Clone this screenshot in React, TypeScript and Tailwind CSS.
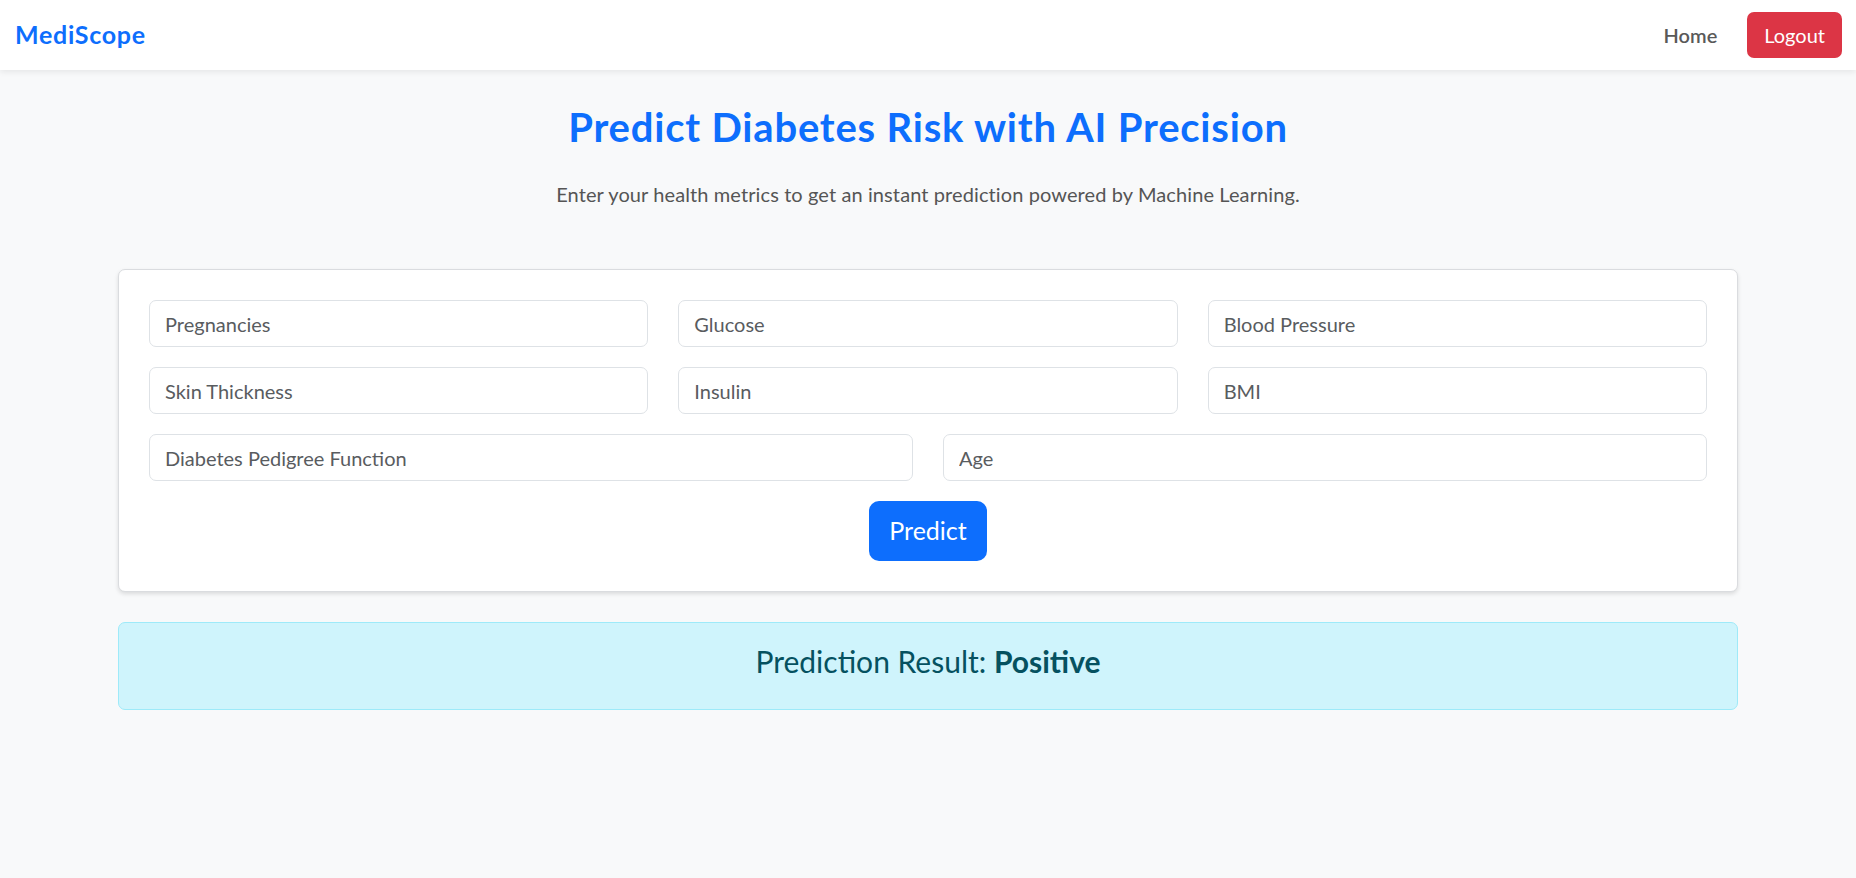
import React from 'react';

const fields = [
  ['Pregnancies', 'Glucose', 'Blood Pressure'],
  ['Skin Thickness', 'Insulin', 'BMI'],
];

function Field({ label }: { label: string }) {
  return (
    <input
      type="text"
      placeholder={label}
      className="w-full h-[47px] px-[15px] rounded-[7px] border border-[#dee2e6] bg-white text-[20px] text-[#212529] placeholder:text-[#595c5f] outline-none"
    />
  );
}

export default function App() {
  return (
    <div className="min-h-screen bg-[#f8f9fa] font-['Lato',sans-serif]">
      {/* Navbar */}
      <header className="h-[70px] bg-white shadow-[0_2px_6px_rgba(0,0,0,0.08)] flex items-center justify-between pl-[15px] pr-[14px]">
        <span className="text-[25px] font-bold text-[#0d6efd] tracking-[0.7px]">MediScope</span>
        <div className="flex items-center gap-[30px]">
          <a className="text-[20px] font-semibold text-[#595959]">Home</a>
          <button className="h-[46px] px-[17px] rounded-[7px] bg-[#dc3545] text-white text-[20px]">Logout</button>
        </div>
      </header>

      <main className="w-[1620px] mx-auto pt-[33px]">
        <h1 className="text-center text-[40px] leading-[48px] font-bold text-[#0d6efd] tracking-[0.8px]">
          Predict Diabetes Risk with AI Precision
        </h1>
        <p className="text-center text-[20px] leading-[30px] text-[#555] mt-[28px] tracking-[0.1px]">
          Enter your health metrics to get an instant prediction powered by Machine Learning.
        </p>

        {/* Form card */}
        <div className="mt-[60px] bg-white border border-[#dadcdf] rounded-[7px] shadow-[0_2px_4px_rgba(0,0,0,0.12)] p-[30px] flex flex-col gap-[20px]">
          {fields.map((row) => (
            <div key={row[0]} className="grid grid-cols-3 gap-[30px]">
              {row.map((f) => (
                <Field key={f} label={f} />
              ))}
            </div>
          ))}
          <div className="grid grid-cols-2 gap-[30px]">
            <Field label="Diabetes Pedigree Function" />
            <Field label="Age" />
          </div>
          <div className="flex justify-center">
            <button className="h-[60px] w-[118px] rounded-[10px] bg-[#0d6efd] text-white text-[25px]">Predict</button>
          </div>
        </div>

        {/* Result */}
        <div className="mt-[30px] rounded-[7px] border border-[#9eeaf9] bg-[#cff4fc] pt-[20px] pb-[30px] text-center text-[30px] leading-[36px] text-[#055160]">
          Prediction Result: <strong className="font-bold">Positive</strong>
        </div>
      </main>
    </div>
  );
}
